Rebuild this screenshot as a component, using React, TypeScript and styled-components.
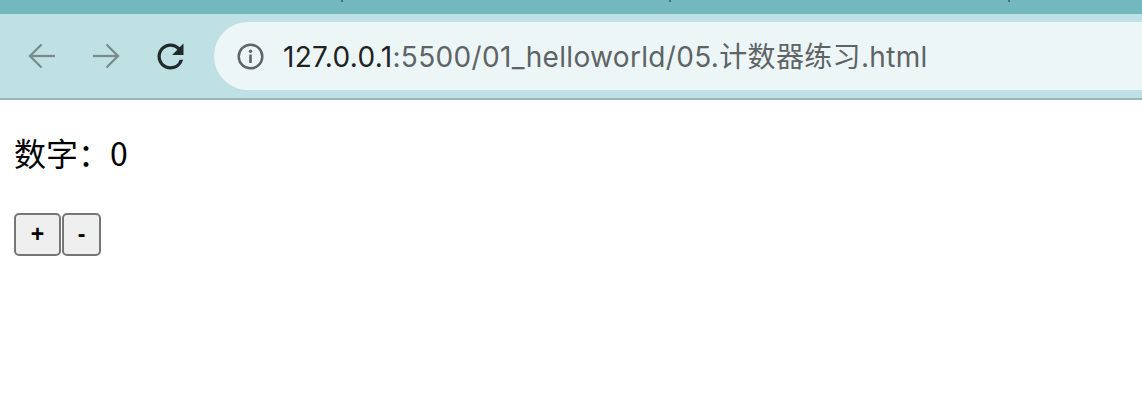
import React, { useState } from "react";
import styled, { createGlobalStyle } from "styled-components";

const GlobalStyle = createGlobalStyle`
  html, body { margin: 0; padding: 0; background: #ffffff; }
  body { font-family: "Noto Sans", "Noto Sans CJK SC", sans-serif; }
`;

const Window = styled.div`
  display: flex;
  flex-direction: column;
  width: 1142px;
  height: 412px;
  overflow: hidden;
`;

const TabStrip = styled.div`
  display: flex;
  align-items: flex-start;
  height: 14px;
  background: #73b8bf;
`;

const TabMark = styled.span<{ $gap: number }>`
  width: 2px;
  height: 2px;
  margin-left: ${(p) => p.$gap}px;
  background: #4f6f78;
`;

const Toolbar = styled.div`
  display: flex;
  align-items: center;
  height: 84px;
  background: #bfe1e3;
  border-bottom: 2px solid #9db6b8;
  padding-left: 28px;
`;

const NavIcon = styled.span<{ $ml: number }>`
  display: flex;
  margin-left: ${(p) => p.$ml}px;
`;

const Omnibox = styled.div`
  display: flex;
  align-items: center;
  flex: 1;
  height: 68px;
  margin-left: 31px;
  margin-right: -40px;
  padding-left: 23px;
  border-radius: 34px 0 0 34px;
  background: #edf6f7;
`;

const Url = styled.span`
  margin-left: 19px;
  padding-bottom: 3px;
  font-family: "Inter", "Noto Sans CJK SC", sans-serif;
  font-size: 28px;
  color: #5e6366;
  white-space: nowrap;
  letter-spacing: 0.33px;
`;

const Host = styled.span`
  color: #1f2223;
`;

const Page = styled.main`
  display: flex;
  flex-direction: column;
  align-items: flex-start;
  padding: 30px 14px 0;
  font-family: "Noto Sans CJK SC", sans-serif;
  color: #000;
`;

const Counter = styled.p`
  margin: 0;
  font-size: 32px;
  line-height: 44px;
`;

const ButtonRow = styled.div`
  display: flex;
  gap: 1px;
  margin-top: 39px;
`;

const CountButton = styled.button<{ $w: number }>`
  width: ${(p) => p.$w}px;
  height: 43px;
  padding: 0;
  border: 2px solid #767676;
  border-radius: 5px;
  background: #efefef;
  font-family: "Liberation Sans", Arial, sans-serif;
  font-weight: 700;
  font-size: 23px;
  color: #000;
  cursor: pointer;
`;

const ArrowIcon = ({ dir, color }: { dir: "left" | "right"; color: string }) => (
  <svg width="27" height="26" viewBox="0 0 27 26" fill="none" stroke={color} strokeWidth="2.3" strokeLinecap="butt" strokeLinejoin="miter">
    {dir === "left" ? (
      <>
        <line x1="2" y1="13" x2="27" y2="13" />
        <polyline points="13.5,1.5 2,13 13.5,24.5" />
      </>
    ) : (
      <>
        <line x1="0" y1="13" x2="25" y2="13" />
        <polyline points="13.5,1.5 25,13 13.5,24.5" />
      </>
    )}
  </svg>
);

const ReloadIcon = () => (
  <svg width="39" height="39" viewBox="0 0 24 24" style={{ margin: "-6.5px" }}>
    <path
      fill="#1f2a2b"
      d="M17.65 6.35A7.958 7.958 0 0 0 12 4c-4.42 0-7.990 3.58-7.99 8s3.57 8 7.99 8c3.73 0 6.84-2.55 7.73-6h-2.08A5.99 5.99 0 0 1 12 18c-3.31 0-6-2.69-6-6s2.69-6 6-6c1.66 0 3.14.69 4.22 1.78L13 11h7V4l-2.35 2.35z"
    />
  </svg>
);

const InfoIcon = () => (
  <svg width="27" height="27" viewBox="0 0 27 27" fill="none">
    <circle cx="13.5" cy="13.5" r="11.8" stroke="#5f6466" strokeWidth="2.5" />
    <circle cx="13.5" cy="8.3" r="1.7" fill="#5f6466" />
    <rect x="12.2" y="11.5" width="2.6" height="8.5" rx="0.6" fill="#5f6466" />
  </svg>
);

export default function App() {
  const [count, setCount] = useState(0);
  return (
    <>
      <GlobalStyle />
      <Window>
        <TabStrip>
          <TabMark $gap={341} />
          <TabMark $gap={326} />
          <TabMark $gap={337} />
        </TabStrip>
        <Toolbar>
          <NavIcon $ml={0}>
            <ArrowIcon dir="left" color="#7b8b8d" />
          </NavIcon>
          <NavIcon $ml={38}>
            <ArrowIcon dir="right" color="#7b8b8d" />
          </NavIcon>
          <NavIcon $ml={37}>
            <ReloadIcon />
          </NavIcon>
          <Omnibox>
            <InfoIcon />
            <Url>
              <Host>127.0.0.1</Host>:5500/01_helloworld/05.计数器练习.html
            </Url>
          </Omnibox>
        </Toolbar>
        <Page>
          <Counter>数字：{count}</Counter>
          <ButtonRow>
            <CountButton $w={47} onClick={() => setCount((c) => c + 1)}>+</CountButton>
            <CountButton $w={39} onClick={() => setCount((c) => c - 1)}>-</CountButton>
          </ButtonRow>
        </Page>
      </Window>
    </>
  );
}
